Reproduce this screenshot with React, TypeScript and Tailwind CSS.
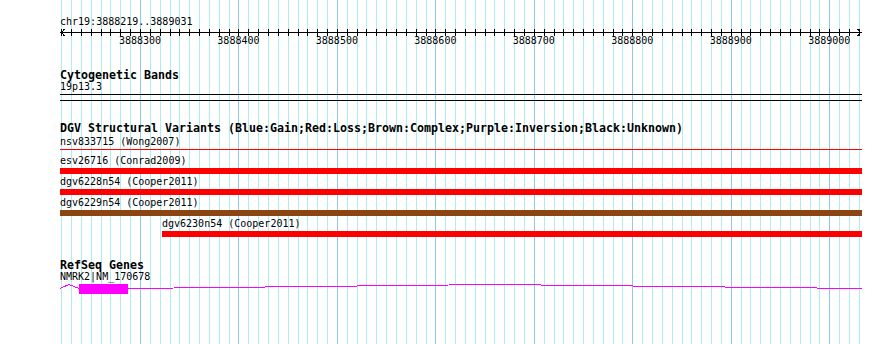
import React from 'react';

const START = 3888219;
const END = 3889031;
const X0 = 60.2;
const SCALE = 0.9847;

// page x for a base position
const px = (bp: number) => X0 + (bp - START) * SCALE;
// x inside the 802px track column
const lx = (bp: number) => px(bp) - 60;

const minor: number[] = [];
for (let bp = 3888220; bp <= 3889030; bp += 10) minor.push(bp);
const major = minor.filter((bp) => bp % 100 === 0);

const variants = [
  { id: 'esv26716', study: 'Conrad2009', color: 'bg-[#ff0000]', start: START },
  { id: 'dgv6228n54', study: 'Cooper2011', color: 'bg-[#ff0000]', start: START },
  { id: 'dgv6229n54', study: 'Cooper2011', color: 'bg-[#8b4513]', start: START },
  { id: 'dgv6230n54', study: 'Cooper2011', color: 'bg-[#ff0000]', start: 3888322 },
];

const Grid: React.FC = () => (
  <svg className="absolute inset-0" width={890} height={344}>
    {minor.map((bp) => (
      <rect
        key={bp}
        x={Math.round(px(bp))}
        y={0}
        width={1}
        height={344}
        fill={bp % 100 === 0 ? '#8ccaf0' : '#afeeee'}
      />
    ))}
  </svg>
);

const Ruler: React.FC = () => (
  <svg width={802} height={19} className="block" shapeRendering="crispEdges">
    <rect x={0} y={4} width={802} height={1} fill="#000" />
    {minor.map((bp) => (
      <rect key={bp} x={Math.round(lx(bp))} y={1} width={1} height={7} fill="#000" />
    ))}
    <polyline points="4.5,1 1.5,4.5 4.5,8" fill="none" stroke="#000" strokeWidth={1} />
    <polyline points="797.5,1 800.5,4.5 797.5,8" fill="none" stroke="#000" strokeWidth={1} />
    {major.map((bp) => (
      <text
        key={bp}
        x={lx(bp)}
        y={16}
        textAnchor="middle"
        fontFamily="'DejaVu Sans Mono', monospace"
        fontSize={10}
        fill="#000"
        shapeRendering="auto"
      >
        {bp}
      </text>
    ))}
  </svg>
);

const Title: React.FC<{ children: React.ReactNode; className?: string }> = ({ children, className }) => (
  <div className={`h-[13px] leading-[16px] text-[11.63px] font-bold whitespace-nowrap ${className ?? ''}`}>
    {children}
  </div>
);

const Label: React.FC<{ children: React.ReactNode; className?: string }> = ({ children, className }) => (
  <div className={`h-[13px] leading-[13px] text-[10px] whitespace-nowrap ${className ?? ''}`}>{children}</div>
);

const GeneModel: React.FC = () => (
  <svg width={802} height={11} className="block" shapeRendering="crispEdges">
    <polyline points="0,5.5 9,1.5 19,5.5" fill="none" stroke="#ff00ff" strokeWidth={1} />
    <rect x={19} y={1} width={49} height={10} fill="#ff00ff" />
    <polyline points="68,5.5 435,1.5 802,5.5" fill="none" stroke="#ff00ff" strokeWidth={1} />
  </svg>
);

export default function App() {
  return (
    <div className="relative w-[890px] h-[344px] overflow-hidden bg-white text-black font-['DejaVu_Sans_Mono',monospace]">
      <Grid />
      <div className="relative ml-[60px] w-[802px]">
        {/* ruler */}
        <Label className="mt-[15px]">
          chr19:{START}..{END}
        </Label>
        <Ruler />

        {/* cytoband track */}
        <Title className="mt-[20px]">Cytogenetic Bands</Title>
        <Label>19p13.3</Label>
        <div className="mt-[1px] h-[7px] border-y border-black" />

        {/* DGV track */}
        <Title className="mt-[19px]">
          DGV Structural Variants (Blue:Gain;Red:Loss;Brown:Complex;Purple:Inversion;Black:Unknown)
        </Title>
        <Label className="mt-[2px]">nsv833715 (Wong2007)</Label>
        <div className="mt-[1px] h-px bg-[#ff0000]" />
        <div className="mt-[4px]">
          {variants.map((v) => {
            const offset = Math.round(px(v.start)) - 60;
            return (
              <div key={v.id} className="mb-[1px]" style={{ paddingLeft: offset }}>
                <Label>
                  {v.id} ({v.study})
                </Label>
                <div className={`mt-[1px] h-[6px] ${v.color}`} />
              </div>
            );
          })}
        </div>

        {/* RefSeq track */}
        <Title className="mt-[20px]">RefSeq Genes</Title>
        <Label>NMRK2|NM_170678</Label>
        <GeneModel />
      </div>
    </div>
  );
}
